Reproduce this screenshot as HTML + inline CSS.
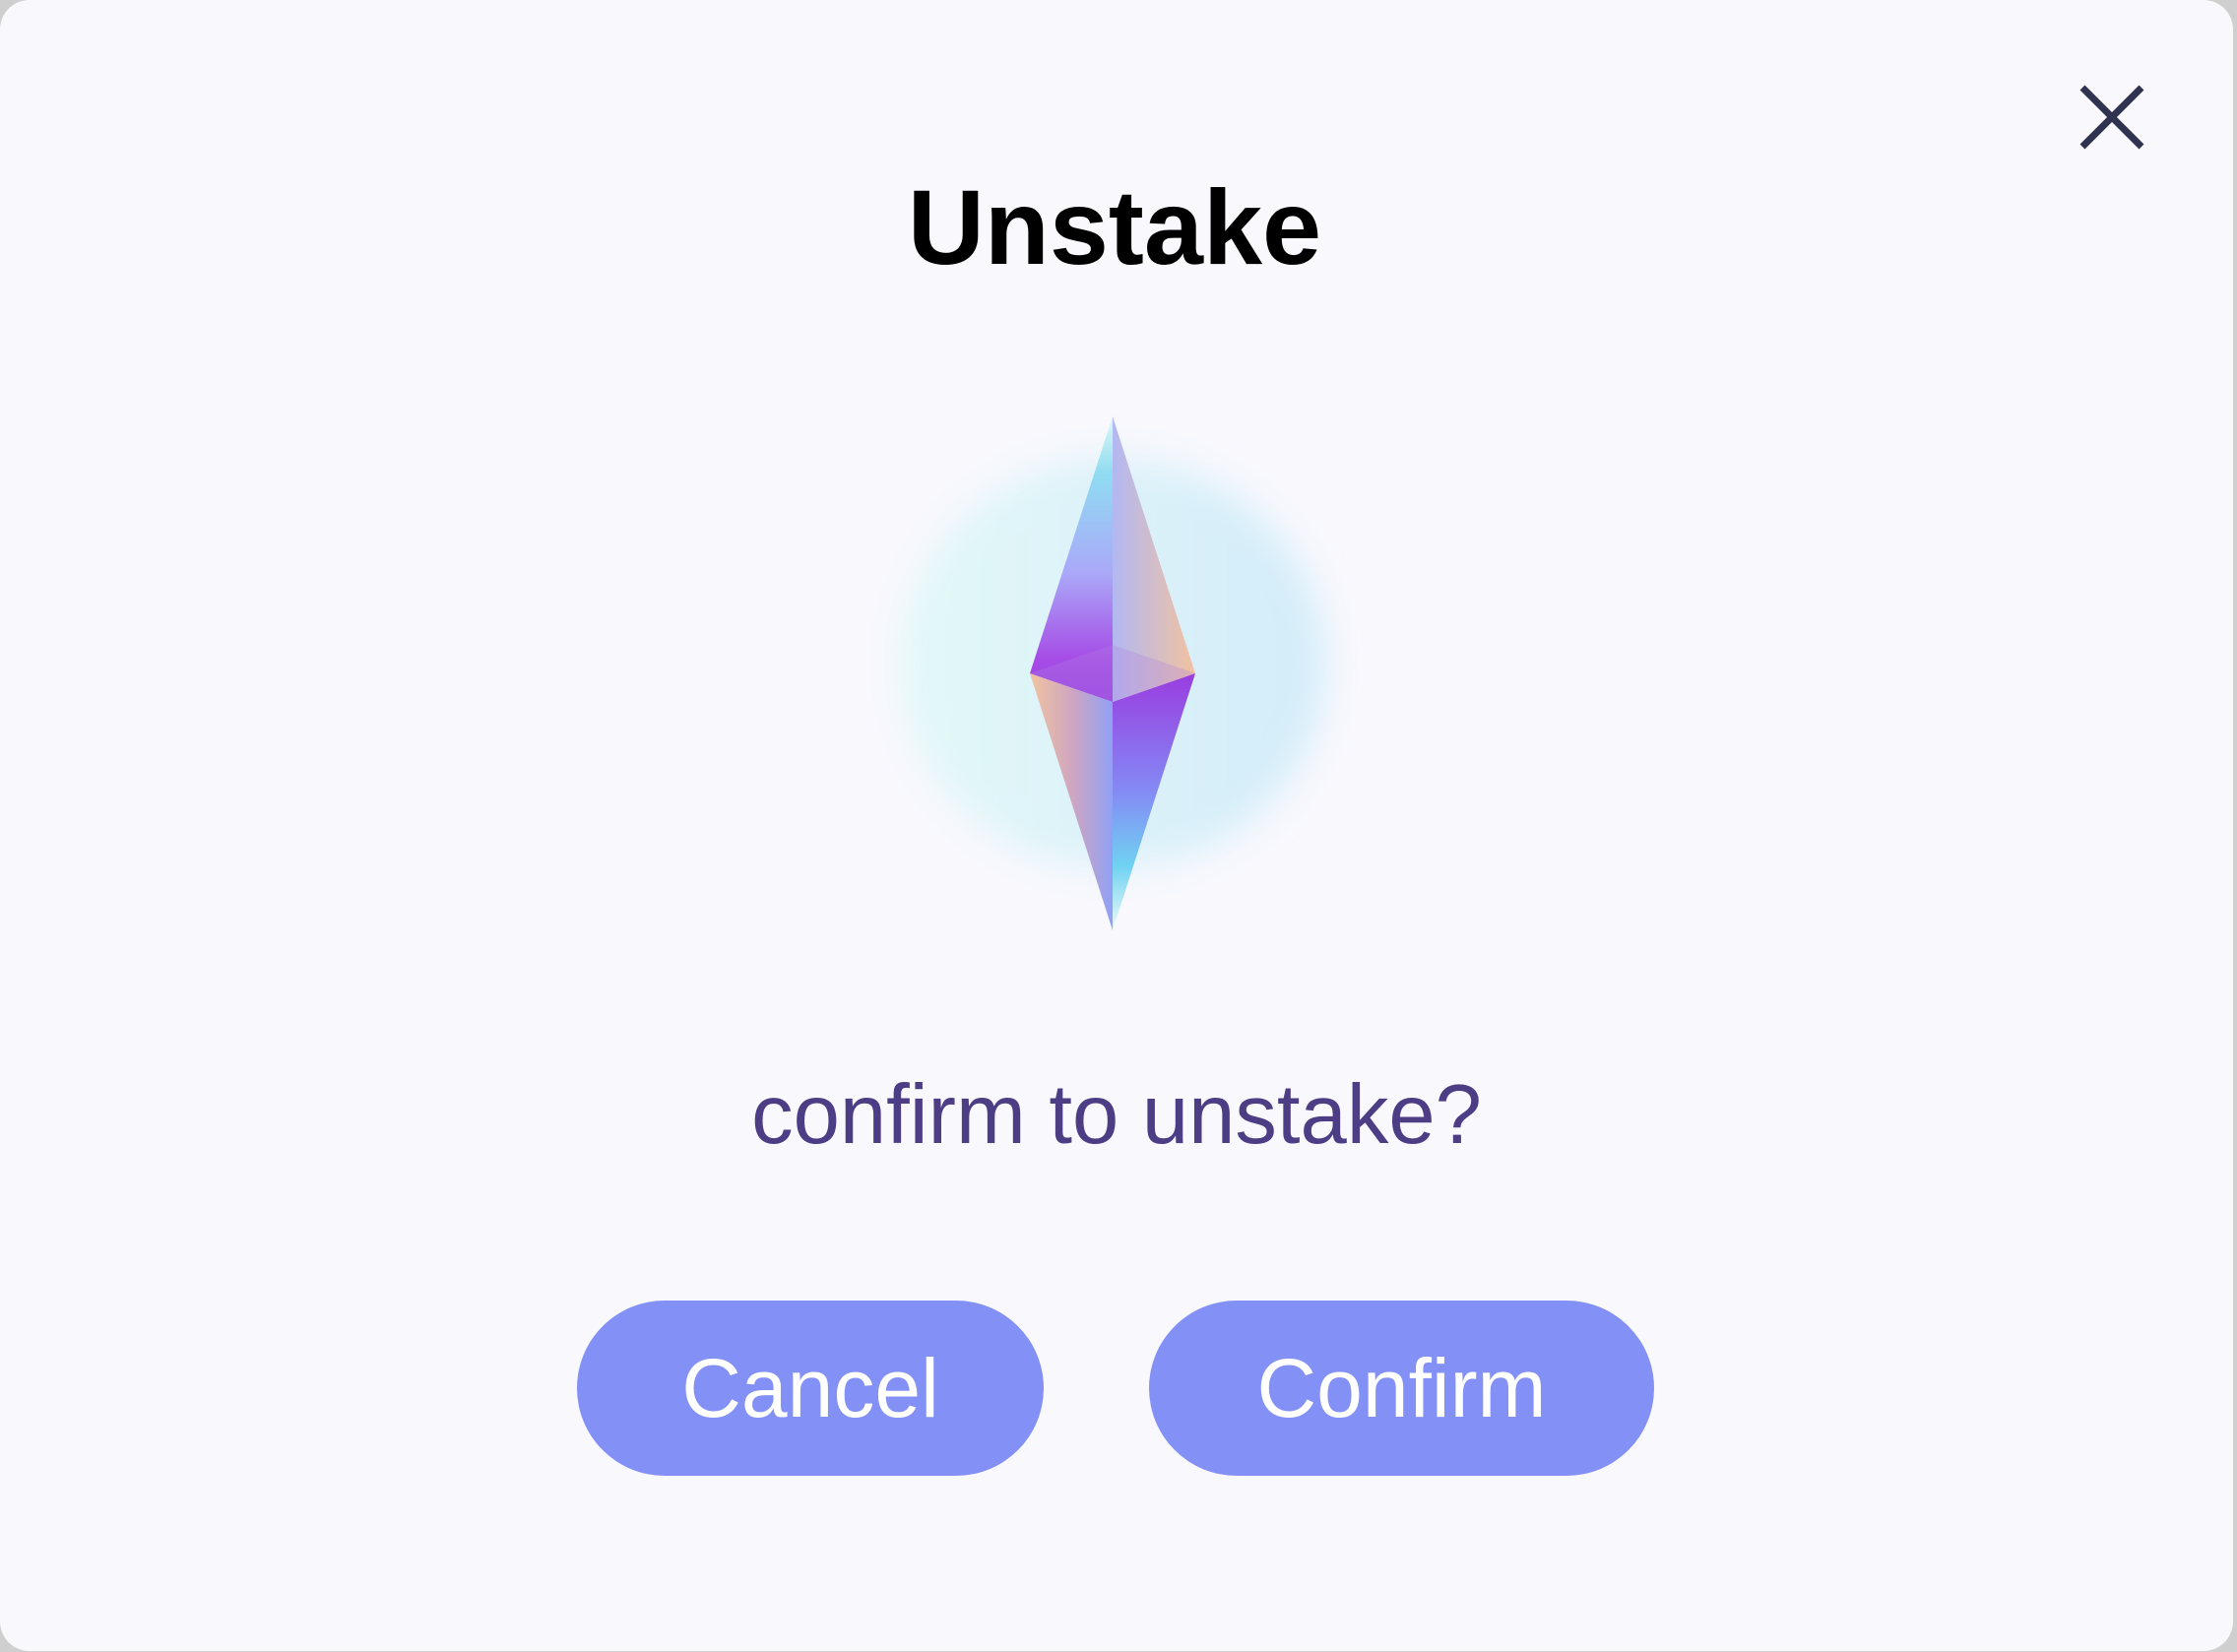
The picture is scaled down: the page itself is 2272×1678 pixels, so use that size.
<!DOCTYPE html>
<html><head><meta charset="utf-8"><style>
html,body{margin:0;padding:0;width:2272px;height:1678px;overflow:hidden;background:#cfcfcf;font-family:"Liberation Sans",sans-serif}
.modal{position:absolute;left:0;top:0;width:2268px;height:1677px;background:#f8f8fd;border-radius:30px}
.t{position:absolute;left:0;width:2268px;text-align:center;white-space:nowrap}
.btn{position:absolute;top:1321px;height:178px;border-radius:89px;background:#8391f6;color:#fff;font-size:84px;text-align:center;line-height:178px}
</style></head><body>
<div class="modal">
<svg style="position:absolute;left:2110px;top:84px" width="70" height="70" viewBox="0 0 70 70"><path d="M5 5L65 65M65 5L5 65" stroke="#2f3350" stroke-width="7" fill="none"/></svg>
<div class="t" style="top:171px;font-size:108px;font-weight:bold;color:#000;line-height:120px;left:-2px">Unstake</div>
<svg style="position:absolute;left:0;top:0" width="2268" height="1000">
<defs>
<linearGradient id="gl" x1="0" y1="0" x2="1" y2="0"><stop offset="0" stop-color="#e2f8f8"/><stop offset="0.5" stop-color="#dcf2f9"/><stop offset="1" stop-color="#d2ecf9"/></linearGradient>
<filter id="b"><feGaussianBlur stdDeviation="18"/></filter>
<linearGradient id="a1" x1="0" y1="0" x2="0" y2="1"><stop offset="0" stop-color="#e0f8f4"/><stop offset="0.2" stop-color="#8fdcf2"/><stop offset="0.55" stop-color="#aaa8f8"/><stop offset="0.85" stop-color="#a64ce6"/><stop offset="1" stop-color="#9a40e0"/></linearGradient>
<linearGradient id="a2" x1="0" y1="0" x2="1" y2="0"><stop offset="0" stop-color="#b2b8f2"/><stop offset="1" stop-color="#f2c2a0"/></linearGradient>
<linearGradient id="a3" x1="0" y1="0" x2="1" y2="0"><stop offset="0" stop-color="#f0c4a0"/><stop offset="0.5" stop-color="#d0a6c0"/><stop offset="1" stop-color="#90a0f4"/></linearGradient>
<linearGradient id="a4" x1="0" y1="0" x2="0" y2="1"><stop offset="0" stop-color="#9a3ce0"/><stop offset="0.45" stop-color="#8488f4"/><stop offset="0.75" stop-color="#70d2f2"/><stop offset="1" stop-color="#eefaf8"/></linearGradient>
</defs>
<ellipse cx="1130" cy="674" rx="215" ry="208" fill="url(#gl)" filter="url(#b)"/>
<polygon points="1130,423 1046,684 1130,713" fill="url(#a1)"/>
<polygon points="1130,423 1214,684 1130,713" fill="url(#a2)"/>
<polygon points="1046,684 1130,713 1130,945" fill="url(#a3)"/>
<polygon points="1214,684 1130,713 1130,945" fill="url(#a4)"/>
<polygon points="1046,684 1130,655 1214,684 1130,713" fill="#b080e0" opacity="0.3"/>
</svg>
<div class="t" style="top:1088px;font-size:85px;color:#4d3d85;line-height:90px">confirm to unstake?</div>
<div class="btn" style="left:586px;width:474px">Cancel</div>
<div class="btn" style="left:1167px;width:513px">Confirm</div>
</div>
</body></html>
